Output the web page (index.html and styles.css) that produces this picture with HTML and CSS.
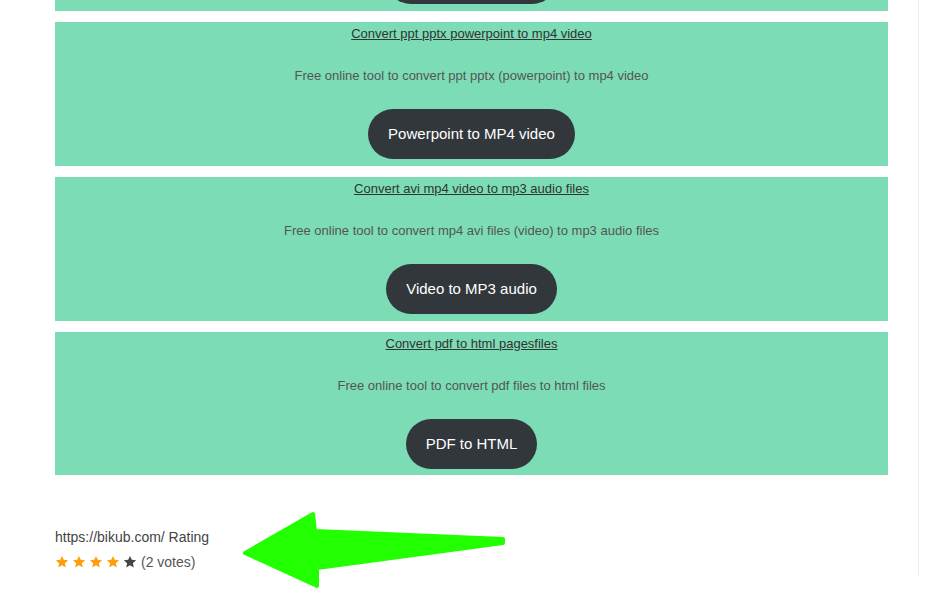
FILE: index.html
```html
<!DOCTYPE html>
<html lang="en">
<head>
    <meta charset="UTF-8">
    <title>Free online tools | bikub.com</title>
    <link rel="stylesheet" href="styles.css">
</head>
<body>
    <div class="layout">
        <div class="main">
            <div class="tool-card first">
                <a class="tool-title" href="#">Convert word docx files to pdf documents</a>
                <p class="tool-desc">Free online tool to convert word docx files to pdf</p>
                <button class="tool-btn">Word to PDF online</button>
            </div>

            <div class="tool-card">
                <a class="tool-title" href="#">Convert ppt pptx powerpoint to mp4 video</a>
                <p class="tool-desc">Free online tool to convert ppt pptx (powerpoint) to mp4 video</p>
                <button class="tool-btn">Powerpoint to MP4 video</button>
            </div>

            <div class="tool-card">
                <a class="tool-title" href="#">Convert avi mp4 video to mp3 audio files</a>
                <p class="tool-desc">Free online tool to convert mp4 avi files (video) to mp3 audio files</p>
                <button class="tool-btn">Video to MP3 audio</button>
            </div>

            <div class="tool-card last">
                <a class="tool-title" href="#">Convert pdf to html pagesfiles</a>
                <p class="tool-desc">Free online tool to convert pdf files to html files</p>
                <button class="tool-btn">PDF to HTML</button>
            </div>

            <div class="rating">
                <div class="rating-site">https://bikub.com/ Rating</div>
                <div class="rating-stars">
                    <svg class="star on" viewBox="0 0 24 24"><polygon points="12,1.5 15.1,8.3 22.5,9 16.9,14 18.5,21.3 12,17.6 5.5,21.3 7.1,14 1.5,9 8.9,8.3"/></svg>
                    <svg class="star on" viewBox="0 0 24 24"><polygon points="12,1.5 15.1,8.3 22.5,9 16.9,14 18.5,21.3 12,17.6 5.5,21.3 7.1,14 1.5,9 8.9,8.3"/></svg>
                    <svg class="star on" viewBox="0 0 24 24"><polygon points="12,1.5 15.1,8.3 22.5,9 16.9,14 18.5,21.3 12,17.6 5.5,21.3 7.1,14 1.5,9 8.9,8.3"/></svg>
                    <svg class="star on" viewBox="0 0 24 24"><polygon points="12,1.5 15.1,8.3 22.5,9 16.9,14 18.5,21.3 12,17.6 5.5,21.3 7.1,14 1.5,9 8.9,8.3"/></svg>
                    <svg class="star" viewBox="0 0 24 24"><polygon points="12,1.5 15.1,8.3 22.5,9 16.9,14 18.5,21.3 12,17.6 5.5,21.3 7.1,14 1.5,9 8.9,8.3"/></svg>
                    <span class="votes">(2 votes)</span>
                </div>
            </div>
        </div>
        <div class="sidebar"></div>
    </div>

    <!-- annotation arrow drawn over the page -->
    <svg class="arrow" width="951" height="598" viewBox="0 0 951 598">
        <polygon points="245,553 313,514 315,531 503,539 503,543 317,568 317,586"/>
    </svg>
</body>
</html>
```

FILE: styles.css
```css
* {
    margin: 0;
    padding: 0;
    box-sizing: border-box;
}

body {
    background: #ffffff;
    font-family: 'Liberation Sans', Arial, sans-serif;
    color: #444;
    overflow: hidden;
    height: 598px;
}

.layout {
    display: flex;
    align-items: flex-start;
}

.main {
    width: 833px;
    margin-left: 55px;
    margin-top: -133px;
}

.sidebar {
    margin-left: 30px;
    width: 1px;
    height: 576px;
    border-left: 1px solid #ececec;
}

.tool-card {
    background: #7bdcb5;
    text-align: center;
    padding: 2px 0 7px;
    margin-bottom: 11px;
    height: 144px;
}

.tool-card.last {
    height: 143px;
}

.tool-title {
    display: inline-block;
    font-size: 13px;
    line-height: 20px;
    color: #333;
    text-decoration: underline;
}

.tool-desc {
    font-size: 13px;
    line-height: 20px;
    color: #555;
    margin-top: 22px;
}

.tool-btn {
    margin-top: 23px;
    height: 50px;
    padding: 0 20px 2px;
    background: #32373c;
    color: #fff;
    border: none;
    border-radius: 25px;
    font-family: 'Liberation Sans', Arial, sans-serif;
    font-size: 15px;
    cursor: pointer;
}

.rating {
    margin-top: 52px;
    font-size: 14px;
}

.rating-site {
    line-height: 20px;
    color: #444;
}

.rating-stars {
    display: flex;
    align-items: center;
    gap: 3px;
    margin-top: 5px;
    height: 20px;
}

.star {
    width: 14px;
    height: 14px;
    fill: #444;
}

.star.on {
    fill: #ff9f10;
}

.votes {
    margin-left: 1px;
    color: #555;
}

.arrow {
    position: absolute;
    left: 0;
    top: 0;
    pointer-events: none;
}

.arrow polygon {
    fill: #22ff00;
    stroke: #22ff00;
    stroke-width: 4;
    stroke-linejoin: round;
}
```
